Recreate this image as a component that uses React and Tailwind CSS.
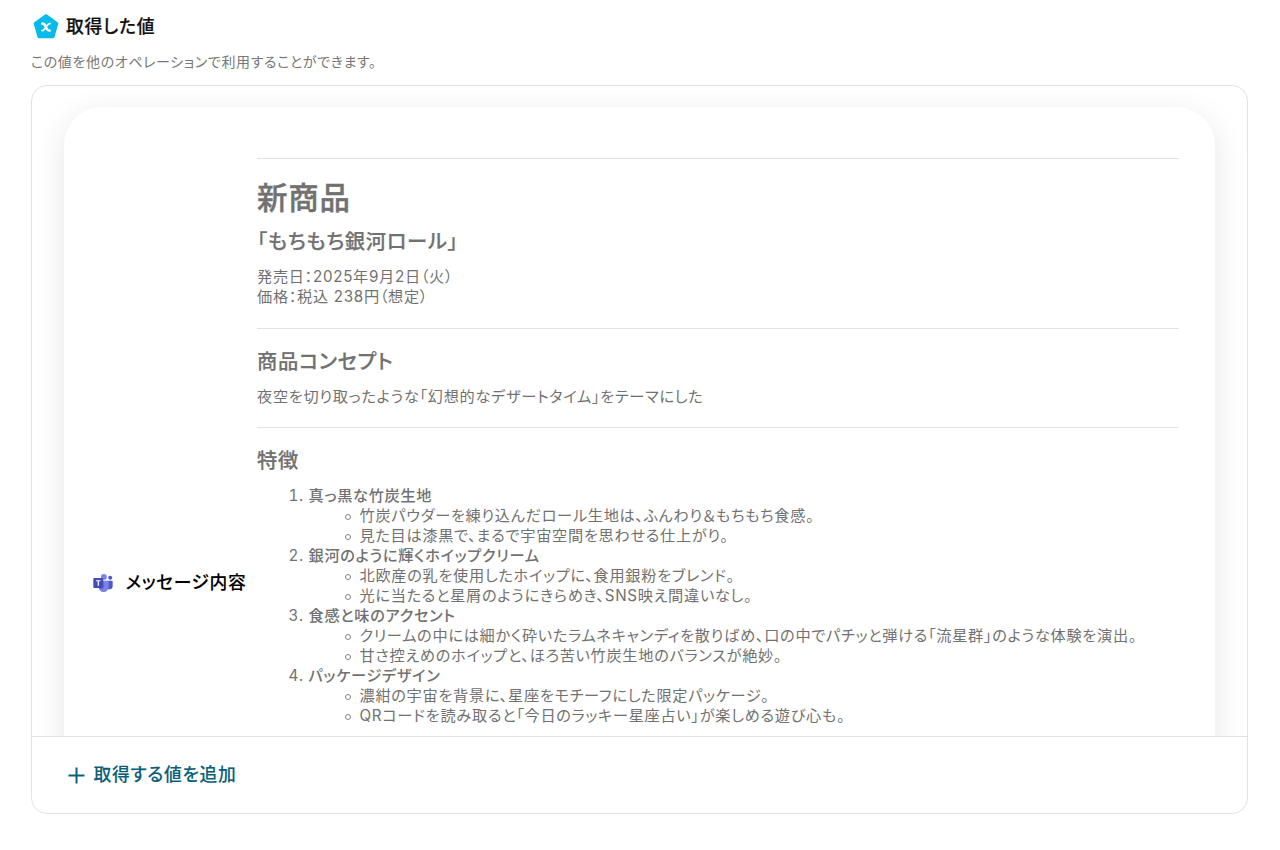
const FEATURES = [
  {
    title: '真っ黒な竹炭生地',
    notes: ['竹炭パウダーを練り込んだロール生地は、ふんわり＆もちもち食感。', '見た目は漆黒で、まるで宇宙空間を思わせる仕上がり。'],
  },
  {
    title: '銀河のように輝くホイップクリーム',
    notes: ['北欧産の乳を使用したホイップに、食用銀粉をブレンド。', '光に当たると星屑のようにきらめき、SNS映え間違いなし。'],
  },
  {
    title: '食感と味のアクセント',
    notes: [
      'クリームの中には細かく砕いたラムネキャンディを散りばめ、口の中でパチッと弾ける「流星群」のような体験を演出。',
      '甘さ控えめのホイップと、ほろ苦い竹炭生地のバランスが絶妙。',
    ],
  },
  {
    title: 'パッケージデザイン',
    notes: ['濃紺の宇宙を背景に、星座をモチーフにした限定パッケージ。', 'QRコードを読み取ると「今日のラッキー星座占い」が楽しめる遊び心も。'],
  },
];

const ValueIcon = () => (
  <svg className="w-[26px] h-[26px] shrink-0" viewBox="0 0 26 26" fill="none">
    <path
      d="M13 2.9 L23.6 10.6 L19.9 23.5 H6.1 L2.4 10.6 Z"
      fill="#04bbea"
      stroke="#04bbea"
      strokeWidth="3.4"
      strokeLinejoin="round"
    />
    <path d="M9.2 10.6 C11.2 10.1 11.9 11.6 12.9 14 C14 16.6 14.8 18 16.8 17.6" stroke="#fff" strokeWidth="2.4" strokeLinecap="round" />
    <path d="M17 10.6 C15.2 10.2 14.2 12.3 13 14.1 C11.8 15.9 10.8 17.9 9 17.6" stroke="#fff" strokeWidth="1.8" strokeLinecap="round" />
  </svg>
);

const TeamsIcon = () => (
  <svg className="w-[20px] h-[18px] shrink-0" viewBox="0 0 2228.8 2073.3">
    <path fill="#5059c9" d="M1554.6 777.5h575.7c54.4 0 98.5 44.1 98.5 98.5v524.4c0 199.9-162 361.9-361.9 361.9h-1.7c-199.9 0-361.9-162-362-361.9V828.9c0-28.4 23-51.4 51.4-51.4z" />
    <circle fill="#5059c9" cx="1943.8" cy="440.6" r="233.3" />
    <circle fill="#7b83eb" cx="1218.1" cy="336.9" r="336.9" />
    <path fill="#7b83eb" d="M1667.3 777.5H717c-53.7 1.3-96.3 45.9-95.1 99.7v598.1c-7.5 322.5 247.7 590.2 570.3 598.1 322.5-7.9 577.8-275.6 570.3-598.1V877.2c1.3-53.8-41.3-98.4-95.2-99.7z" />
    <path opacity=".12" d="M1192 777.5v900c0 60-50 110-110 110H680c-35-80-58-190-58-312V877c-1-54 41-98 95-100z" />
    <path fill="#444cb8" d="M95 466.5h950.3c52.5 0 95 42.5 95 95v950.3c0 52.5-42.5 95-95 95H95c-52.5 0-95-42.5-95-95V561.5c0-52.5 42.5-95 95-95z" />
    <path fill="#fff" d="M820.2 838.2H640.2v517.3H499.2V838.2H320.1v-120.4h500.1z" />
  </svg>
);

const Divider = () => <hr className="border-t border-[#e2e2e2]" />;

const Message = () => (
  <div className="w-[922px] pt-[51px] text-[15.2px] leading-[20px] tracking-[0.7px] text-[#717171]">
    <Divider />
    <h1 className="mt-[19px] text-[30.5px] leading-[40px] font-medium [-webkit-text-stroke:0.4px]">新商品</h1>
    <h3 className="mt-[11px] text-[20.3px] leading-[26px] font-medium [-webkit-text-stroke:0.2px]">「もちもち銀河ロール」</h3>
    <p className="mt-[12px]">
      発売日：2025年9月2日（火）
      <br />
      価格：税込 238円（想定）
    </p>
    <div className="mt-[21px]"><Divider /></div>
    <h3 className="mt-[20px] text-[20.3px] leading-[26px] font-medium [-webkit-text-stroke:0.2px]">商品コンセプト</h3>
    <p className="mt-[12px]">夜空を切り取ったような「幻想的なデザートタイム」をテーマにした</p>
    <div className="mt-[20px]"><Divider /></div>
    <h3 className="mt-[20px] text-[20.3px] leading-[26px] font-medium [-webkit-text-stroke:0.2px]">特徴</h3>
    <ol className="mt-[12px] pl-[51.5px] list-decimal">
      {FEATURES.map((f) => (
        <li key={f.title}>
          <span className="font-medium">{f.title}</span>
          <ul className="pl-[36px]">
            {f.notes.map((n) => (
              <li
                key={n}
                className="flex items-center whitespace-nowrap before:mt-[2px] before:mr-[9px] before:w-[6px] before:h-[6px] before:rounded-full before:border before:border-[#858585] before:content-['']"
              >
                {n}
              </li>
            ))}
          </ul>
        </li>
      ))}
    </ol>
  </div>
);

const App = () => (
  <div className="w-[1280px] h-[850px] overflow-hidden bg-white pt-[13px] pl-[31px] font-[Inter,'Noto_Sans_CJK_JP',sans-serif] [font-feature-settings:'palt']" lang="ja">
    {/* Heading */}
    <div className="flex items-center gap-[7px] h-[26px] pl-[2px]">
      <ValueIcon />
      <h2 className="pt-[2px] text-[17.8px] leading-[26px] font-medium tracking-[0.8px] text-[#111] [-webkit-text-stroke:0.2px]">取得した値</h2>
    </div>
    <p className="mt-[12px] text-[14px] leading-[22px] tracking-[0.62px] text-[#777]">この値を他のオペレーションで利用することができます。</p>

    {/* Values panel */}
    <div className="mt-[12px] w-[1217px] h-[729px] flex flex-col rounded-[16px] border border-[#e2e2e2] overflow-hidden">
      <div className="h-[650px] shrink-0 overflow-hidden px-[32px] pt-[21px]">
        <div className="h-[952px] flex rounded-[38px] bg-white shadow-[0_8px_32px_rgba(0,0,0,0.1)]">
          <div className="w-[193px] shrink-0 flex items-center gap-[13px] pl-[28.5px]">
            <TeamsIcon />
            <span className="whitespace-nowrap text-[17.8px] font-medium tracking-[0.6px] text-black [-webkit-text-stroke:0.1px]">メッセージ内容</span>
          </div>
          <Message />
        </div>
      </div>
      <div className="flex-1 flex items-center border-t border-[#e2e2e2] pl-[36px]">
        <button className="flex items-center gap-[8.5px] text-[#0b5f7a]">
          <svg className="w-[17px] h-[17px]" viewBox="0 0 17 17" fill="none" stroke="currentColor" strokeWidth="2">
            <path d="M8.5 .5v16M.5 8.5h16" />
          </svg>
          <span className="text-[17.8px] leading-[26px] font-medium tracking-[0.7px] [-webkit-text-stroke:0.1px]">取得する値を追加</span>
        </button>
      </div>
    </div>
  </div>
);

export default App;
